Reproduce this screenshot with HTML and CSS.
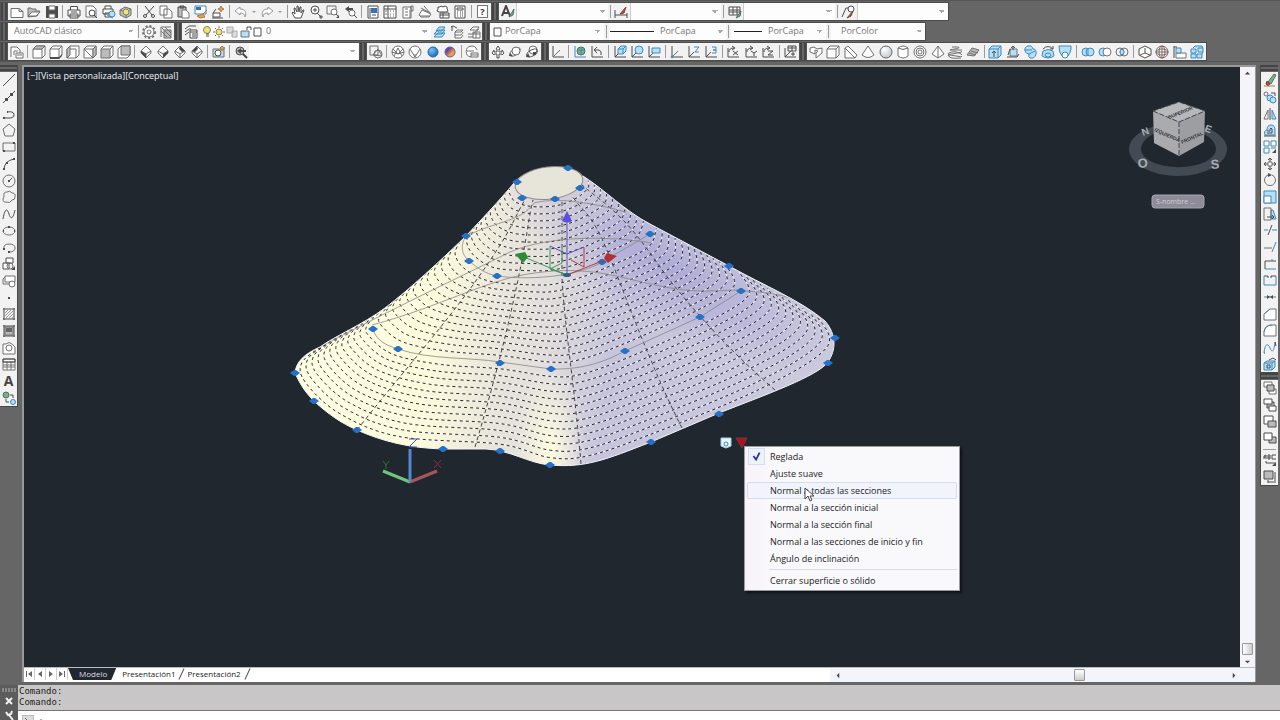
FILE: index.html
```html
<!DOCTYPE html>
<html lang="es">
<head>
<meta charset="utf-8">
<title>AutoCAD clásico</title>
<link rel="stylesheet" href="styles.css">
</head>
<body>
<header class="bars">
<div class="bar-row">
<div class="bar bar-standard" role="toolbar" aria-label="Estándar">
<span class="grip"></span>
<button class="tool" aria-label="Nuevo"><svg viewBox="0 0 14 14"><path class="w" d="M1 3.500h8l4 3v6H1zM9 3.500v3h4"/></svg></button>
<button class="tool" aria-label="Abrir"><svg viewBox="0 0 14 14"><path class="g" d="M1 12V3h3l1 1h4v2h4l-3 5z"/><path class="w" d="M1 11l4-4h8l-4 4z"/></svg></button>
<button class="tool" aria-label="Guardar"><svg viewBox="0 0 14 14"><path class="k" d="M1 1h12v12H1z"/><path class="w" d="M4 1h6v4H4zM4 9h6v4H4z"/></svg></button>
<span class="sep"></span>
<button class="tool" aria-label="Imprimir"><svg viewBox="0 0 14 14"><path class="w d" d="M3.500 5V1.500h7V5M1 5h12v6H1zM3 9h8v4H3z"/><path class="d" d="M4 7h6"/></svg></button>
<button class="tool" aria-label="Vista previa"><svg viewBox="0 0 14 14"><path class="w" d="M2 1h7l3 3v8H2z"/><circle class="w d" cx="8" cy="8" r="3"/><path class="d" d="M10 10l3 3"/></svg></button>
<button class="tool" aria-label="Publicar"><svg viewBox="0 0 14 14"><path class="w d" d="M3 4V1h6v3M1 4h10v5H1zM3 8h6v4H3z"/><circle class="lb b" cx="10" cy="9" r="3"/><path class="b" d="M5 10l6 3"/></svg></button>
<button class="tool" aria-label="3DDWF"><svg viewBox="0 0 14 14"><path class="g" d="M1 5l5-3 6 2v6l-5 3-6-3zM1 5l6 2 5-3M7 7v6"/><circle class="yl" cx="7" cy="7" r="3"/></svg></button>
<span class="sep"></span>
<button class="tool" aria-label="Cortar"><svg viewBox="0 0 14 14"><path class="d" d="M3 1l7 9M12 1L4 10"/><circle class="d" cx="3" cy="11" r="1.500"/><circle class="d" cx="11" cy="11" r="1.500"/></svg></button>
<button class="tool" aria-label="Copiar"><svg viewBox="0 0 14 14"><path class="w" d="M1 1h7v9H1zM5 4h5l3 3v6H5z"/></svg></button>
<button class="tool" aria-label="Pegar"><svg viewBox="0 0 14 14"><path class="g d" d="M2 2h8v10H2zM4 1h4v2H4z"/><path class="w" d="M6 5h4l3 3v5H6z"/></svg></button>
<button class="tool" aria-label="Igualar propiedades"><svg viewBox="0 0 14 14"><path class="w b" d="M1 1h11v8H1z"/><path class="bf" d="M2 2h5v3H2z"/><path class="o" d="M3 11l6-2 2 3-5 1zM9 9l4-4"/></svg></button>
<button class="tool" aria-label="Editor de bloques"><svg viewBox="0 0 14 14"><path class="w d" d="M2 8h7v4H2zM1 13h11M2 8l3-4"/><path class="o" d="M10 1l1 2 2 1-2 1-1 2-1-2-2-1 2-1z"/></svg></button>
<span class="sep"></span>
<button class="tool" aria-label="Deshacer"><svg viewBox="0 0 14 14"><path class="w faint" d="M1 6l5-4v2c5 0 7 3 5 8 0-3-2-4-5-4v2z"/></svg></button>
<button class="drop" aria-label="Lista deshacer"></button>
<button class="tool" aria-label="Rehacer"><svg viewBox="0 0 14 14"><path class="w faint" d="M13 6L8 2v2C3 4 1 7 3 12c0-3 2-4 5-4v2z"/></svg></button>
<button class="drop" aria-label="Lista rehacer"></button>
<span class="sep"></span>
<button class="tool" aria-label="Encuadre"><svg viewBox="0 0 14 14"><path class="w d" d="M4 13L1 8l1-1 2 2-1-6h1l2 4V1h1l1 6 1-5h1v6l2-3h1l-3 8z"/></svg></button>
<button class="tool" aria-label="Zoom tiempo real"><svg viewBox="0 0 14 14"><circle class="w d" cx="6" cy="5" r="4"/><path class="d" d="M4 5h4M6 3v4M8 8l4 4M10 12h4M12 10v4"/></svg></button>
<button class="tool" aria-label="Zoom ventana"><svg viewBox="0 0 14 14"><path d="M1 1h9v8H1z"/><circle class="w" cx="8" cy="7" r="3"/><path class="d" d="M10 9l3 3"/><path class="k" d="M10 13h3v-3z"/></svg></button>
<button class="tool" aria-label="Zoom previo"><svg viewBox="0 0 14 14"><path class="k" d="M1 4l4-3v2h4v2H5v2z"/><circle class="w" cx="8" cy="8" r="3"/><path class="d" d="M10 10l3 3"/></svg></button>
<span class="sep"></span>
<button class="tool" aria-label="Propiedades"><svg viewBox="0 0 14 14"><path class="w d" d="M2 1h10v12H2z"/><path class="bf" d="M5 3h6v5H5z"/><path class="d" d="M4 3v9M6 10h4"/></svg></button>
<button class="tool" aria-label="DesignCenter"><svg viewBox="0 0 14 14"><path class="w d" d="M1 1h12v12H1zM5 1v12M1 4h12"/><path d="M7 6h1M10 6h1M7 9h1M10 9h1M7 11h1M10 11h1M2 6h2M2 9h2"/></svg></button>
<button class="tool" aria-label="Paletas"><svg viewBox="0 0 14 14"><path class="w" d="M2 2h8v11H2zM10 1h2v5h-2zM4 4h3M4 7h3M4 10h3M9 5v8"/></svg></button>
<button class="tool" aria-label="Conjuntos de planos"><svg viewBox="0 0 14 14"><path class="w" d="M1 10l3-5 9 4-2 3H3zM3 3l9 5M6 1l6 7M2 11h10"/></svg></button>
<button class="tool" aria-label="Marcas"><svg viewBox="0 0 14 14"><path class="w d" d="M2 4V2h2l1-1 2 1 2-1 2 1v2l1 1-1 2H3L1 6zM4 8h9v5H4zM7 8v5M4 10h9"/></svg></button>
<button class="tool" aria-label="Calculadora"><svg viewBox="0 0 14 14"><path class="w d" d="M2 1h10v12H2zM4 3h6v2H4z"/><path class="d" d="M4 7h1M7 7h1M9 7h1M4 9h1M7 9h1M9 9h1M4 11h1M7 11h1M9 11h1"/></svg></button>
<span class="sep"></span>
<button class="tool" aria-label="Ayuda"><span class="help">?</span></button>
</div>
<div class="bar bar-styles" role="toolbar" aria-label="Estilos">
<span class="grip"></span>
<button class="tool" aria-label="Estilo de texto"><svg viewBox="0 0 14 14"><path class="t" d="M1 11L5 1l4 10M2 8h6"/><path class="gr" d="M13 4l-5 8 4-2z"/></svg></button>
<select class="combo" aria-label="Estilo de texto"><option></option></select>
<span class="sep"></span>
<button class="tool" aria-label="Estilo de cota"><svg viewBox="0 0 14 14"><path class="d" d="M1 5v8M13 8v5M1 10h12"/><path class="r" d="M12 2l-6 7 4-1z"/></svg></button>
<select class="combo" aria-label="Estilo de cota"><option></option></select>
<span class="sep"></span>
<button class="tool" aria-label="Estilo de tabla"><svg viewBox="0 0 14 14"><path class="w d" d="M1 2h11v8H1zM1 5h11M5 2v8M9 2v8M1 7h11"/><path class="gr" d="M13 6l-5 7 4-2z"/></svg></button>
<select class="combo" aria-label="Estilo de tabla"><option></option></select>
<span class="sep"></span>
<button class="tool" aria-label="Estilo de directriz"><svg viewBox="0 0 14 14"><path class="d" d="M1 12L5 3h3"/><circle class="w d" cx="10" cy="4" r="3"/><path class="r" d="M12 6l-6 7 4-2z"/></svg></button>
<select class="combo" aria-label="Estilo de directriz"><option></option></select>
</div>
</div>
<div class="bar-row">
<div class="bar bar-workspace" role="toolbar" aria-label="Espacios de trabajo">
<span class="grip"></span>
<select class="combo" aria-label="Espacio de trabajo"><option>AutoCAD clásico</option></select>
<span class="sep"></span>
<button class="tool" aria-label="Parámetros"><svg viewBox="0 0 14 14"><circle class="gear" cx="7" cy="7" r="6"/><circle class="w" cx="7" cy="7" r="5"/><circle cx="7" cy="7" r="2"/></svg></button>
<button class="tool" aria-label="Mi espacio"><svg viewBox="0 0 14 14"><path class="g" d="M2 2h10M2 2v10M5 5h7v8H5zM3 3l9 9M6 2l6 6M2 6l6 6"/></svg></button>
</div>
<div class="bar bar-layers" role="toolbar" aria-label="Capas">
<span class="grip"></span>
<button class="tool" aria-label="Propiedades de capas"><svg viewBox="0 0 14 14"><path class="w d" d="M1 4l4-3h7M1 7l4-3h2M1 10l4-3M6 5h7v8H6zM6 7h7M8 9h4M8 11h4"/></svg></button>
<div class="field field-layer">
<svg class="layer-marks" viewBox="0 0 60 14"><circle class="yl" cx="5" cy="5" r="3.500"/><path class="d" d="M4 9h3M4 11h3"/><circle class="yl" cx="17" cy="7" r="3"/><path d="M17 1v2M17 11v2M11 7h2M21 7h2M13 3l1 1M20 10l1 1M21 3l-1 1M13 11l1-1"/><path class="g pale" d="M25 2h6v6h-6zM30 6h5v6h-5z"/><path class="d" d="M45 5V2h4v3"/><path class="lb" d="M39 6h8v6h-8z"/><path class="w d" d="M52 3h7v8h-7z"/></svg>
<select class="combo" aria-label="Capa actual"><option>0</option></select>
</div>
<button class="tool" aria-label="Definir actual"><svg viewBox="0 0 14 14"><path class="lb b" d="M1 12l4-4h7l-3 4zM1 9l4-4h7l-3 4zM3 6l3-4h6l-3 4z"/></svg></button>
<button class="tool" aria-label="Capa previa"><svg viewBox="0 0 14 14"><path class="d" d="M2 1v5M1 2l2-1 4 2"/><path class="w" d="M5 7l2-2h6l-2 2zM5 10h6l2-3M5 13h6l2-3M5 7v6"/></svg></button>
<button class="tool" aria-label="Estados de capas"><svg viewBox="0 0 14 14"><path class="w" d="M3 5l3-3h6l-2 3zM1 9h5l6-5M1 12h5M6 7h7v6H6zM6 9h7M9 7v6"/></svg></button>
</div>
<div class="bar bar-props" role="toolbar" aria-label="Propiedades">
<span class="grip"></span>
<div class="field field-color"><svg class="mark" viewBox="0 0 14 14"><path class="w d" d="M4 3h7v8H4z"/></svg><select class="combo" aria-label="Color"><option>PorCapa</option></select></div>
<span class="sep"></span>
<div class="field field-type"><span class="line"></span><select class="combo" aria-label="Tipo de línea"><option>PorCapa</option></select></div>
<span class="sep"></span>
<div class="field field-weight"><span class="line"></span><select class="combo" aria-label="Grosor de línea"><option>PorCapa</option></select></div>
<span class="sep"></span>
<div class="field field-plot"><select class="combo" aria-label="Estilo de trazado"><option>PorColor</option></select></div>
</div>
</div>
<div class="bar-row">
<div class="bar bar-view" role="toolbar" aria-label="Vista">
<span class="grip"></span>
<button class="tool" aria-label="Vistas guardadas"><svg viewBox="0 0 14 14"><path class="w" d="M1 12V2h6l3 3v3M4 10V6h4M6 8h7v5H6zM7 10h5"/></svg></button>
<span class="sep"></span>
<button class="tool" aria-label="Superior"><svg viewBox="0 0 14 14"><path class="w" d="M1 4h9v9H1zM1 4l3-3h9v9l-3 3M10 4l3-3"/><path class="g" d="M1 4l3-3h9l-3 3z"/></svg></button>
<button class="tool" aria-label="Inferior"><svg viewBox="0 0 14 14"><path class="w" d="M1 4h9v9H1zM1 4l3-3h9v9l-3 3M10 4l3-3"/><path class="k" d="M1 12h9l3-3v2l-3 3H1z"/></svg></button>
<button class="tool" aria-label="Izquierda"><svg viewBox="0 0 14 14"><path class="w" d="M1 4h9v9H1zM1 4l3-3h9v9l-3 3"/><path class="g" d="M1 4l3-3v9l-3 3z"/></svg></button>
<button class="tool" aria-label="Derecha"><svg viewBox="0 0 14 14"><path class="w" d="M1 4h9v9H1zM1 4l3-3h9v9l-3 3z"/><path class="g" d="M10 4l3-3v9l-3 3z"/></svg></button>
<button class="tool" aria-label="Frontal"><svg viewBox="0 0 14 14"><path class="w" d="M1 4l3-3h9v9l-3 3M10 4l3-3"/><path class="g" d="M1 4h9v9H1z"/></svg></button>
<button class="tool" aria-label="Posterior"><svg viewBox="0 0 14 14"><path class="w" d="M1 4l3-3h9v9l-3 3H1z"/><path class="g" d="M4 1h9v9H4z"/></svg></button>
<span class="sep"></span>
<button class="tool" aria-label="Isométrico SO"><svg viewBox="0 0 14 14"><path class="w" d="M2 6l5-5 5 5v2l-5 5-5-5zM2 6l5 3 5-3M7 9v4"/><path class="k" d="M2 6l5 3v4L2 8z"/></svg></button>
<button class="tool" aria-label="Isométrico SE"><svg viewBox="0 0 14 14"><path class="w" d="M2 6l5-5 5 5v2l-5 5-5-5zM2 6l5 3 5-3"/><path class="k" d="M12 6L7 9v4l5-5z"/></svg></button>
<button class="tool" aria-label="Isométrico NE"><svg viewBox="0 0 14 14"><path class="w" d="M2 6l5-5 5 5v2l-5 5-5-5zM2 6l5 3 5-3M7 9v4"/><path class="k" d="M7 1l5 5-3 1-3-3z"/></svg></button>
<button class="tool" aria-label="Isométrico NO"><svg viewBox="0 0 14 14"><path class="w" d="M2 6l5-5 5 5v2l-5 5-5-5zM2 6l5 3 5-3M7 9v4"/><path class="k" d="M7 1L2 6l3 1 3-3z"/></svg></button>
<span class="sep"></span>
<button class="tool" aria-label="Crear cámara"><svg viewBox="0 0 14 14"><path class="lb" d="M1 4h11v8H1z"/><circle class="w d" cx="6" cy="8" r="3"/><path class="o" d="M10 1l1 1 2 1-2 1-1 2-1-2-1-1z"/></svg></button>
<span class="sep"></span>
<button class="tool" aria-label="Vista previa anterior"><svg viewBox="0 0 14 14"><circle class="g d" cx="6" cy="6" r="4"/><path class="k" d="M3 6l4-3v2h5v2H7v2z"/><path class="t" d="M9 9l4 4"/></svg></button>
<select class="combo" aria-label="Vista"><option></option></select>
</div>
<div class="bar bar-visual" role="toolbar" aria-label="Estilos visuales">
<span class="grip"></span>
<button class="tool" aria-label="Estructura alámbrica 2D"><svg viewBox="0 0 14 14"><path d="M1 1h8v9H1z"/><circle cx="9" cy="9" r="4"/><path d="M4 10l5-6 4 7z"/></svg></button>
<span class="sep"></span>
<button class="tool" aria-label="Alámbrica 3D"><svg viewBox="0 0 14 14"><circle class="w" cx="7" cy="7" r="6"/><path d="M2 4l5 5 5-5M3 11l4-8 4 8M1 7l6 2 6-2"/></svg></button>
<button class="tool" aria-label="Oculta 3D"><svg viewBox="0 0 14 14"><circle class="w" cx="7" cy="7" r="6"/><path d="M2 4l5 8 5-8M7 12V9"/></svg></button>
<button class="tool" aria-label="Realista"><svg viewBox="0 0 14 14"><circle fill="url(#ball-blue)" stroke="#1769b8" cx="7" cy="7" r="5"/></svg></button>
<button class="tool" aria-label="Conceptual"><svg viewBox="0 0 14 14"><circle fill="url(#ball-duo)" stroke="#6f579d" cx="7" cy="7" r="5"/></svg></button>
<span class="sep"></span>
<button class="tool" aria-label="Administrar estilos"><svg viewBox="0 0 14 14"><path class="w" d="M12 5A5.500 5.500 0 1 0 6 12M2 6h7M6 8h7v4H6zM6 10h7"/></svg></button>
</div>
<div class="bar bar-orbit" role="toolbar" aria-label="Órbita">
<span class="grip"></span>
<button class="tool" aria-label="Encuadre 3D"><svg viewBox="0 0 14 14"><path class="w d" d="M7 1l2 3H8v3h3V5l2 3-2 2V9H8v4H6V9H3v1L1 8l2-3v2h3V4H5z"/></svg></button>
<button class="tool" aria-label="Órbita libre"><svg viewBox="0 0 14 14"><ellipse transform="rotate(-35 7 7)" cx="7" cy="7" rx="6" ry="3"/><circle class="w" cx="8" cy="6" r="4"/><path class="k" d="M1 11h4l-3-3z"/></svg></button>
<button class="tool" aria-label="Órbita continua"><svg viewBox="0 0 14 14"><circle class="w" cx="8" cy="5" r="4"/><ellipse transform="rotate(-30 7 8)" class="d" cx="7" cy="8" rx="6" ry="3"/><path class="k" d="M1 12h4L3 8zM8 7h3v3H8z"/></svg></button>
</div>
<div class="bar bar-ucs" role="toolbar" aria-label="SCP">
<span class="grip"></span>
<button class="tool" aria-label="SCP"><svg viewBox="0 0 14 14"><path class="d" d="M2 1v11h11"/><path d="M2 12l7-7"/></svg></button>
<span class="sep"></span>
<button class="tool" aria-label="SCP universal"><svg viewBox="0 0 14 14"><path class="b" d="M2 1v11h11"/><circle class="gr" cx="8" cy="6" r="4"/><path class="b" d="M5 5h6M8 2v8"/></svg></button>
<button class="tool" aria-label="SCP previo"><svg viewBox="0 0 14 14"><path class="d" d="M2 1v11h11M5 5h4q3 1 2 5M7 2L4 5l3 3"/></svg></button>
<span class="sep"></span>
<button class="tool" aria-label="SCP cara"><svg viewBox="0 0 14 14"><path class="d" d="M2 1v11h11M2 12l4-4"/><path class="lb b" d="M5 4l3-3h5v5l-3 3H5zM5 4h5v5M10 4l3-3"/></svg></button>
<button class="tool" aria-label="SCP objeto"><svg viewBox="0 0 14 14"><path class="d" d="M2 1v11h11M2 12l4-4"/><circle class="lb b" cx="9" cy="5" r="4"/></svg></button>
<button class="tool" aria-label="SCP vista"><svg viewBox="0 0 14 14"><path class="d" d="M2 1v11h11M2 12l4-4"/><path class="lb b" d="M5 3h8v5H5z"/></svg></button>
<span class="sep"></span>
<button class="tool" aria-label="Origen"><svg viewBox="0 0 14 14"><path class="d" d="M2 1v11h11"/><path d="M2 12l6-6"/><circle class="b" cx="2" cy="12" r="1"/></svg></button>
<button class="tool" aria-label="Vector eje Z"><svg viewBox="0 0 14 14"><path class="d" d="M2 1v11h11M2 12l5-5"/><path class="b" d="M7 2h5L8 7h4"/></svg></button>
<button class="tool" aria-label="3 puntos"><svg viewBox="0 0 14 14"><path class="d" d="M2 1v11h11M2 12l5-5"/><path class="b" d="M8 2h4v3H9h3v3H8"/></svg></button>
<span class="sep"></span>
<button class="tool" aria-label="Girar X"><svg viewBox="0 0 14 14"><path class="d" d="M2 3v9h11M3 7q0-4 5-4M6 1l3 2-3 2M7 6l5 4M12 6l-5 4"/></svg></button>
<button class="tool" aria-label="Girar Y"><svg viewBox="0 0 14 14"><path class="d" d="M2 3v9h11M3 7q0-4 5-4M6 1l3 2-3 2M7 6l3 2 3-2M10 8v3"/></svg></button>
<button class="tool" aria-label="Girar Z"><svg viewBox="0 0 14 14"><path class="d" d="M2 3v9h11M3 7q0-4 5-4M6 1l3 2-3 2M7 6h5l-5 4h5"/></svg></button>
<span class="sep"></span>
<button class="tool" aria-label="Aplicar SCP"><svg viewBox="0 0 14 14"><path class="d" d="M2 3v9h11M2 12l6-6M5 1h8v5H5zM9 1v5M5 3h8M10 7v4M8 9h4"/></svg></button>
</div>
<div class="bar bar-model" role="toolbar" aria-label="Modelado">
<span class="grip"></span>
<button class="tool" aria-label="Polisólido"><svg viewBox="0 0 14 14"><path class="w" d="M1 3l4-1 3 2 5-1v5l-6 5V8l2-2-3-1v4L1 7z"/></svg></button>
<button class="tool" aria-label="Prisma"><svg viewBox="0 0 14 14"><path class="w" d="M1 4l3-3h9v9l-3 3H1zM1 4h9l3-3M10 4v9"/></svg></button>
<button class="tool" aria-label="Cuña"><svg viewBox="0 0 14 14"><path class="w" d="M1 12V3l3-2 9 9-2 3H1zM1 3l10 10"/></svg></button>
<button class="tool" aria-label="Cono"><svg viewBox="0 0 14 14"><path class="w" d="M7 1l6 9q-6 5-12 0z"/></svg></button>
<button class="tool" aria-label="Esfera"><svg viewBox="0 0 14 14"><circle fill="url(#ball-gray)" stroke="#666" cx="7" cy="7" r="6"/></svg></button>
<button class="tool" aria-label="Cilindro"><svg viewBox="0 0 14 14"><path class="w" d="M2 3v8q5 4 10 0V3M2 3q5-4 10 0-5 3-10 0"/></svg></button>
<button class="tool" aria-label="Toroide"><svg viewBox="0 0 14 14"><circle class="w" cx="7" cy="7" r="6"/><circle cx="7" cy="7" r="4"/><circle cx="7" cy="7" r="2"/></svg></button>
<button class="tool" aria-label="Pirámide"><svg viewBox="0 0 14 14"><path class="w" d="M7 1l6 8-6 4-6-4zM7 1v12"/></svg></button>
<button class="tool" aria-label="Hélice"><svg viewBox="0 0 14 14"><path d="M4 2h6q3 1-3 2t-5 1 11 0-4 3-8 0 12 1-5 2-7 0q0 3 12 2"/></svg></button>
<button class="tool" aria-label="Superficie plana"><svg viewBox="0 0 14 14"><path class="g" d="M1 10l5-7 7 2-5 6z"/><path d="M3 8l7 2M5 6l7 2"/></svg></button>
<span class="sep"></span>
<button class="tool" aria-label="Extrusión"><svg viewBox="0 0 14 14"><path class="lb b" d="M1 4l3-3h9v9l-3 3H1zM1 4h9v9M10 4l3-3"/><path class="d" d="M6 12V6M4 8l2-2 2 2"/></svg></button>
<button class="tool" aria-label="Pulsartirar"><svg viewBox="0 0 14 14"><path class="lb" d="M4 4h7v7H4z"/><path class="d" d="M1 12h10l2-3M7 5V1M5 3l2-2 2 2M2 10l2-6"/></svg></button>
<button class="tool" aria-label="Barrer"><svg viewBox="0 0 14 14"><path class="lb b" d="M2 6q-1-4 3-5t5 3q4 0 3 5t-6 4q-2-1-1-4-3 0-4-3zM6 9l6-3M2 5h7"/></svg></button>
<button class="tool" aria-label="Revolución"><svg viewBox="0 0 14 14"><path class="lb b" d="M2 6q5-3 10 0l1 5q-6 4-12 0z"/><path class="d" d="M2 4q5-5 10 0M12 1v3H9"/><ellipse class="b" cx="7" cy="10" rx="3" ry="2"/></svg></button>
<button class="tool" aria-label="Solevar"><svg viewBox="0 0 14 14"><path class="lb b" d="M1 1h12v3q-1 5-3 7H4Q1 8 1 1z"/><circle class="w b" cx="7" cy="10" r="3"/></svg></button>
<span class="sep"></span>
<button class="tool" aria-label="Unión"><svg viewBox="0 0 14 14"><circle class="lb b" cx="5" cy="7" r="4"/><circle class="lb b" cx="9" cy="7" r="4"/><path class="b" d="M7 4v6"/></svg></button>
<button class="tool" aria-label="Diferencia"><svg viewBox="0 0 14 14"><circle class="lb b" cx="5" cy="7" r="4"/><circle class="w" cx="9" cy="7" r="4"/></svg></button>
<button class="tool" aria-label="Intersección"><svg viewBox="0 0 14 14"><circle cx="5" cy="7" r="4"/><circle cx="9" cy="7" r="4"/><path class="lb b" d="M7 4q4 3 0 6-4-3 0-6z"/></svg></button>
<span class="sep"></span>
<button class="tool" aria-label="Desplazamiento 3D"><svg viewBox="0 0 14 14"><path class="w d" d="M1 4l6-3 6 3v6l-6 3-6-3z"/><path class="d" d="M7 3v5M7 8l5 2"/><path class="rs" d="M7 8l-5 2"/></svg></button>
<button class="tool" aria-label="Giro 3D"><svg viewBox="0 0 14 14"><circle class="w" cx="7" cy="7" r="6"/><ellipse class="rs" cx="7" cy="7" rx="3" ry="6"/><ellipse cx="7" cy="7" rx="6" ry="3"/><path d="M7 1v12M1 7h12"/></svg></button>
<button class="tool" aria-label="Alineación 3D"><svg viewBox="0 0 14 14"><path class="w" d="M3 8h10v5H3z"/><path class="lb b" d="M3 3h5v5H3z"/><path class="d" d="M1 1v12M1 2h3"/></svg></button>
<button class="tool" aria-label="Matriz 3D"><svg viewBox="0 0 14 14"><path class="lb b" d="M1 4h5v4H1zM8 3h5v4H8zM1 9h5v4H1zM7 9h5v4H7zM3 3l2-2h7l1 2M12 9l1-2"/></svg></button>
</div>
</div>
</header>
<main class="work">
<aside class="side side-left">
<div class="rail rail-draw" role="toolbar" aria-label="Dibujo">
<span class="grip-top"></span>
<button class="tool" aria-label="Línea"><svg viewBox="0 0 14 14"><path class="d" d="M2 12L12 2"/><path class="k" d="M1 12h1v1H1zM12 1h1v1h-1z"/></svg></button>
<button class="tool" aria-label="Línea auxiliar"><svg viewBox="0 0 14 14"><path class="d" d="M1 13L13 1"/><path class="k" d="M3 8h3v3H3zM8 3h3v3H8z"/></svg></button>
<button class="tool" aria-label="Polilínea"><svg viewBox="0 0 14 14"><path class="d" d="M1 11h8q4-1 3-4t-7-2"/><path class="k" d="M1 10h2v2H1zM5 4h1v2H5z"/></svg></button>
<button class="tool" aria-label="Polígono"><svg viewBox="0 0 14 14"><path d="M7 1l6 5-2 7H3L1 6z"/></svg></button>
<button class="tool" aria-label="Rectángulo"><svg viewBox="0 0 14 14"><path d="M1 3h12v8H1z"/><path class="k" d="M1 10h2v2H1zM11 2h2v2h-2z"/></svg></button>
<button class="tool" aria-label="Arco"><svg viewBox="0 0 14 14"><path class="d" d="M2 13Q2 4 12 2"/><path class="k" d="M1 11h2v2H1zM4 5h2v2H4zM11 1h2v2h-2z"/></svg></button>
<button class="tool" aria-label="Círculo"><svg viewBox="0 0 14 14"><circle cx="7" cy="7" r="6"/><path class="d" d="M7 7l3-3"/><path class="k" d="M6 6h2v2H6z"/></svg></button>
<button class="tool" aria-label="Nube de revisión"><svg viewBox="0 0 14 14"><path d="M5 2q3-2 5 1 4 0 3 4 0 3-3 3-2 4-5 2-4 1-4-3 1-2 1-3-1-4 3-4z"/></svg></button>
<button class="tool" aria-label="Spline"><svg viewBox="0 0 14 14"><path class="d" d="M1 12C3 1 5 1 7 7s4 5 6-4"/></svg></button>
<button class="tool" aria-label="Elipse"><svg viewBox="0 0 14 14"><ellipse cx="7" cy="7" rx="6" ry="4"/><path class="k" d="M1 6h1v2H1zM12 6h1v2h-1zM6 2h2v2H6z"/></svg></button>
<button class="tool" aria-label="Arco elíptico"><svg viewBox="0 0 14 14"><path d="M2 9q-1-5 5-5 6 0 6 4t-6 4"/><path class="k" d="M1 8h2v2H1zM6 11h2v2H6z"/></svg></button>
<button class="tool" aria-label="Insertar bloque"><svg viewBox="0 0 14 14"><path class="w d" d="M4 1h7v5H4zM1 6h6v6H1z"/><circle cx="8" cy="9" r="3"/><path class="k" d="M9 13h4V9z"/></svg></button>
<button class="tool" aria-label="Crear bloque"><svg viewBox="0 0 14 14"><path class="w" d="M3 2h10v6H3z"/><path d="M3 3L1 5v5h6"/><circle class="w" cx="10" cy="10" r="3"/></svg></button>
<button class="tool" aria-label="Punto"><svg viewBox="0 0 14 14"><path class="k" d="M6 7h2v2H6z"/></svg></button>
<button class="tool" aria-label="Sombreado"><svg viewBox="0 0 14 14"><path class="d" d="M1 2h12M1 12h12M2 1v12M12 1v12"/><path class="faint" d="M3 6l3-3M3 9l6-6M3 12l8-8M6 12l5-5M9 12l2-2"/></svg></button>
<button class="tool" aria-label="Degradado"><svg viewBox="0 0 14 14"><path class="g" d="M3 3h8v8H3z"/><path class="d" d="M1 2h12M1 12h12M2 1v12M12 1v12"/><path class="bar-fill" d="M4 4h6v4H4z"/></svg></button>
<button class="tool" aria-label="Región"><svg viewBox="0 0 14 14"><path class="w" d="M1 3h3q3-3 6 0l3 3v7H1z"/><circle cx="7" cy="7" r="3"/></svg></button>
<button class="tool" aria-label="Tabla"><svg viewBox="0 0 14 14"><path class="w" d="M1 2h12v11H1zM1 5h12M1 8h12M1 10h12M5 5v8M9 5v8"/><path class="d" d="M1 2h12v3H1z"/></svg></button>
<button class="tool letter" aria-label="Texto">A</button>
<button class="tool" aria-label="Añadir seleccionados"><svg viewBox="0 0 14 14"><circle class="gr" cx="4" cy="4" r="3"/><circle class="lb b" cx="11" cy="11" r="2.500"/><path class="d" d="M8 4h3v3M4 8v3h3"/></svg></button>
</div>
</aside>
<section class="window" aria-label="Dibujo">
<div class="canvas">
<svg class="scene" role="img" aria-label="Superficie solevada">
<defs>
<radialGradient id="ball-blue" cx=".35" cy=".3" r=".8"><stop offset="0" stop-color="#7cc4f5"/><stop offset="1" stop-color="#1160b4"/></radialGradient>
<radialGradient id="ball-gray" cx=".35" cy=".3" r=".8"><stop offset="0" stop-color="#fff"/><stop offset="1" stop-color="#bcc3c9"/></radialGradient>
<linearGradient id="ball-duo" x1="0" y1="0" x2="1" y2="1"><stop offset=".3" stop-color="#6743a5"/><stop offset=".65" stop-color="#efa13e"/></linearGradient>
<linearGradient id="skin" gradientUnits="userSpaceOnUse" x1="295" y1="330" x2="835" y2="390"><stop offset="0" stop-color="#fefee2"/><stop offset=".25" stop-color="#fdfbdc"/><stop offset=".38" stop-color="#e9e5dc"/><stop offset=".46" stop-color="#e2dedd"/><stop offset=".58" stop-color="#c7c5dd"/><stop offset="1" stop-color="#cccade"/></linearGradient>
<radialGradient id="shade" gradientUnits="userSpaceOnUse" cx="0" cy="0" r="1" gradientTransform="translate(668 268) rotate(30) scale(190 58)"><stop offset="0" stop-color="#a6a4d6" stop-opacity=".8"/><stop offset="1" stop-color="#a6a4d6" stop-opacity="0"/></radialGradient>
<radialGradient id="glow" gradientUnits="userSpaceOnUse" cx="0" cy="0" r="1" gradientTransform="translate(550 450) scale(36 90)"><stop offset="0" stop-color="#fffde0"/><stop offset="1" stop-color="#fffde0" stop-opacity="0"/></radialGradient>
<clipPath id="body-clip"><path d="M514 183C500 200 480 221 466 236C440 261 410 289 385 308C362 325 335 336 320 347C304 354 296 362 295 373C301 386 306 393 314 401C328 414 341 423 357 430C382 441 408 448 443 449H486C510 450 528 463 550 465C585 468 605 460 651 442L719 413C765 395 818 376 828 362C836 350 837 335 825 321C800 300 765 286 729 266L650 224C625 211 605 190 583 176C570 160 525 166 514 183Z"/></clipPath>
</defs>
<g transform="translate(-24 -67)">
<g clip-path="url(#body-clip)">
<g class="fills">
<rect x="290" y="160" width="550" height="310" fill="url(#skin)"/>
<rect x="290" y="160" width="550" height="310" fill="url(#shade)"/>
<rect x="500" y="340" width="100" height="130" fill="url(#glow)"/>
</g>
<g id="mesh"></g>
<path class="ribs" d="M357 430C400 375 445 325 480 275S510 225 526 198M475 447C495 380 510 320 520 270S528 220 533 200M581 464C575 390 565 330 562 278V200M682 428C660 385 638 330 615 270S585 215 572 196M775 390C740 360 690 310 655 260S605 205 581 184"/>
<path class="section" d="M320 347C390 310 460 277 510 252C550 235 610 236 652 243M372 325C440 307 490 278 535 273C590 265 620 278 660 286S715 290 741 290M466 236C500 220 520 222 534 203C560 196 600 205 626 212M373 329C376 340 385 345 398 349C430 360 470 357 500 362L551 369C585 370 608 360 625 351L700 317L741 291C790 292 815 305 828 325M466 236C459 247 463 256 469 261S485 274 497 276C525 280 575 278 602 262L650 234"/>
</g>
<path class="outline" d="M514 183C500 200 480 221 466 236C440 261 410 289 385 308C362 325 335 336 320 347C304 354 296 362 295 373C301 386 306 393 314 401C328 414 341 423 357 430C382 441 408 448 443 449H486C510 450 528 463 550 465C585 468 605 460 651 442L719 413C765 395 818 376 828 362C836 350 837 335 825 321C800 300 765 286 729 266L650 224C625 211 605 190 583 176"/>
<ellipse class="cap" cx="549" cy="183" rx="34" ry="16" transform="rotate(-7 549 183)"/>
<g class="grips" id="grips"></g>
<g class="gizmo">
<path stroke="#3f9a5c" d="M550 246v23M550 269l17 6M524 257l43 18M550 269l12-6v-15"/><path stroke="#5a4dc0" d="M567 275v-54M550 246l17 8 17-7"/><path stroke="#b03a48" d="M567 275l40-16M584 247v20M571 260l13 7"/>
<path fill="#2c8a3a" d="M515 254l10-2 3 5-5 6z"/><path fill="#b32f35" d="M617 256l-10-3-3 5 4 5z"/><path fill="#5c4fe0" d="M567 211l-5 10q5 3 10 0z"/><ellipse fill="#2e5e86" cx="567" cy="275" rx="4" ry="2"/>
</g>
<g class="ucs"><path stroke="#71c479" d="M410 482l-27-11"/><path stroke="#a9535b" d="M410 482l27-11"/><path stroke="#5588cf" d="M410 482v-33"/><path class="thin" stroke="#2c5fa8" d="M409 439h8l-8 8h8"/><path class="thin" stroke="#2f7540" d="M383 461l3 4 3-4M386 465v4"/><path class="thin" stroke="#8e2f38" d="M434 460l7 8M441 460l-7 8"/></g>
<g class="compass"><path class="ring" fill-rule="evenodd" d="M1129 149a49 26 0 0 1 98 0 49 27 0 0 1-98 0M1141 149a37 18 0 0 0 75 0 37 20 0 0 0-75 0"/>
<text class="pole dim" transform="translate(1143 136) rotate(-20)">N</text><text class="pole dim" transform="translate(1204 131) rotate(20)">E</text>
<path class="face-top" d="M1153 111l26-9 26 9-26 11z"/><path class="face-left" d="M1153 111l26 11v34l-25-13z"/><path class="face-right" d="M1205 111l-26 11v34l25-14z"/>
<path class="seams" d="M1153 111l26 11 26-11M1179 122v34M1153 111l26-9 26 9"/>
<text class="cube-text" transform="translate(1154 131) rotate(24)">IZQUIERDA</text><text class="cube-text" transform="translate(1182 144) rotate(-24)">FRONTAL</text><text class="cube-text" transform="translate(1169 119) rotate(-22)">SUPERIOR</text>
<text class="pole" transform="translate(1138 168) rotate(-4)">O</text><text class="pole" transform="translate(1211 169) rotate(-4)">S</text></g>
<rect x="1152" y="195" width="52" height="13" rx="3" fill="#8e8c98" stroke="#a7a5b0"/><text class="scp" x="1156" y="204">S-nombre ...</text>
<g class="handles"><path fill="#e8f6ff" stroke="#9ed2f0" d="M721 438h10v8l-5 2-5-2z"/><circle cx="726" cy="444" r="2" fill="#fff" stroke="#3b80aa"/><path fill="#b01020" stroke="#7d343b" d="M736 438h11l-5 10z"/></g>
</g>
</svg>
<span class="view-label">[−][Vista personalizada][Conceptual]</span>
<div class="menu" role="menu">
<button role="menuitemradio" aria-checked="true"><svg viewBox="0 0 17 17"><path d="M5 8l3 4 4-8"/></svg>Reglada</button>
<button role="menuitemradio">Ajuste suave</button>
<button role="menuitemradio" class="hot">Normal a todas las secciones</button>
<button role="menuitemradio">Normal a la sección inicial</button>
<button role="menuitemradio">Normal a la sección final</button>
<button role="menuitemradio">Normal a las secciones de inicio y fin</button>
<button role="menuitem">Ángulo de inclinación</button>
<hr>
<button role="menuitem">Cerrar superficie o sólido</button>
</div>
<svg class="pointer" viewBox="0 0 12 16"><path d="M1 1v11l3-3 2 5 2-1-2-4h4z"/></svg>
</div>
<div class="vscroll"><button aria-label="Subir"><svg viewBox="0 0 8 8"><path d="M1 5h6L4 2z"/></svg></button><span class="thumb"></span><button aria-label="Bajar"><svg viewBox="0 0 8 8"><path d="M1 3h6L4 6z"/></svg></button></div>
<div class="sheet-row">
<nav class="sheets">
<button class="step" aria-label="Primera"><svg viewBox="0 0 8 8"><path d="M1 1h1v6H1zM7 1v6L3 4z"/></svg></button><button class="step" aria-label="Anterior"><svg viewBox="0 0 8 8"><path d="M6 1v6L2 4z"/></svg></button><button class="step" aria-label="Siguiente"><svg viewBox="0 0 8 8"><path d="M2 1v6l4-3z"/></svg></button><button class="step" aria-label="Última"><svg viewBox="0 0 8 8"><path d="M1 1v6l4-3zM6 1h1v6H6z"/></svg></button>
<button class="sheet active">Modelo</button><button class="sheet">Presentación1</button><button class="sheet">Presentación2</button>
</nav>
<div class="hscroll"><button aria-label="Izquierda"><svg viewBox="0 0 8 8"><path d="M6 1v6L3 4z"/></svg></button><span class="thumb"></span><button aria-label="Derecha"><svg viewBox="0 0 8 8"><path d="M2 1v6l3-3z"/></svg></button></div>
</div>
</section>
<aside class="side side-right">
<div class="rail rail-modify" role="toolbar" aria-label="Modificar">
<span class="grip-top"></span>
<button class="tool" aria-label="Borrar"><svg viewBox="0 0 14 14"><path class="gr" d="M5 9l6-8 2 1-5 9z"/><path class="r" d="M4 8l3 3-2 2-2-2z"/><path class="o" d="M1 13h11"/></svg></button>
<button class="tool" aria-label="Copiar objeto"><svg viewBox="0 0 14 14"><circle cx="3" cy="4" r="2"/><path class="d" d="M8 3h4v3"/><circle class="lb b" cx="7" cy="8" r="3"/><circle class="lb b" cx="10" cy="10" r="3"/></svg></button>
<button class="tool" aria-label="Simetría"><svg viewBox="0 0 14 14"><path class="w" d="M5 3v9H1z"/><path class="lb b" d="M9 3v9h4z"/><path class="d" d="M7 1v12"/></svg></button>
<button class="tool" aria-label="Desfase"><svg viewBox="0 0 14 14"><path class="lb b" d="M2 12q-2-4 2-5 0-5 4-5t4 5v5z"/><path class="d" d="M4 10h5V6q-1-2-2 0v2H4M1 13h12"/></svg></button>
<button class="tool" aria-label="Matriz"><svg viewBox="0 0 14 14"><path class="w b" d="M1 1h5v5H1zM8 1h5v5H8zM1 8h5v5H1zM8 8h5"/><path class="k" d="M9 13h4V9z"/></svg></button>
<button class="tool" aria-label="Desplazar"><svg viewBox="0 0 14 14"><path class="d" d="M7 1v12M1 7h12M5 3l2-2 2 2M5 11l2 2 2-2M3 5L1 7l2 2M11 5l2 2-2 2"/><path class="w" d="M5 5h4v4H5z"/></svg></button>
<button class="tool" aria-label="Girar"><svg viewBox="0 0 14 14"><path d="M9 2a5.500 5.500 0 1 1-4 0"/><path class="k" d="M5 0l4 2-4 2z"/></svg></button>
<button class="tool" aria-label="Escala"><svg viewBox="0 0 14 14"><path class="lb b" d="M1 1h12v12H1z"/><path class="w b" d="M1 6h7v7H1z"/></svg></button>
<button class="tool" aria-label="Estirar"><svg viewBox="0 0 14 14"><path class="lb b" d="M8 3h2l3 9H8z"/><path d="M1 1h7v12H1z"/><path class="d" d="M4 10h7M9 8l2 2-2 2"/></svg></button>
<button class="tool" aria-label="Recortar"><svg viewBox="0 0 14 14"><path class="b" d="M1 7h4M9 7h5"/><path class="d" d="M9 2L5 12"/></svg></button>
<button class="tool" aria-label="Alargar"><svg viewBox="0 0 14 14"><path d="M1 8h8"/><path class="b" d="M13 2L9 12"/></svg></button>
<button class="tool" aria-label="Partir en un punto"><svg viewBox="0 0 14 14"><path class="d" d="M2 12V4h11"/><path class="b" d="M2 12h11M9 4V2"/></svg></button>
<button class="tool" aria-label="Partir"><svg viewBox="0 0 14 14"><path class="d" d="M1 3h4v2M8 5V3h5"/><path class="b" d="M1 3v9h12V3"/></svg></button>
<button class="tool" aria-label="Juntar"><svg viewBox="0 0 14 14"><path class="b" d="M1 7h12"/><path class="k" d="M4 5l3 2-3 2zM10 5L7 7l3 2z"/></svg></button>
<button class="tool" aria-label="Chaflán"><svg viewBox="0 0 14 14"><path class="w" d="M1 13V7l6-5h6v11z"/><path class="b" d="M1 7l6-5"/></svg></button>
<button class="tool" aria-label="Empalme"><svg viewBox="0 0 14 14"><path class="w" d="M1 13V9q1-7 8-7h4v11z"/><path class="b" d="M1 9q1-7 8-7"/></svg></button>
<button class="tool" aria-label="Fusionar"><svg viewBox="0 0 14 14"><path class="b" d="M1 13C2 3 5 3 7 8s4 4 5-6"/><path class="d" d="M1 13h1M12 2l1 4"/></svg></button>
<button class="tool" aria-label="Descomponer"><svg viewBox="0 0 14 14"><path class="lb b" d="M1 6l3-2h8v6l-3 3H1zM1 6h8v7M9 6l3-2"/><path class="d" d="M4 8h3v3H4zM6 3l4-2 3 2"/></svg></button>
</div>
<div class="rail rail-order" role="toolbar" aria-label="Orden de objetos">
<span class="grip-top"></span>
<button class="tool" aria-label="Al frente"><svg viewBox="0 0 14 14"><path class="w" d="M1 1h8v5H1zM6 8h7v5H6z"/><path class="g d" d="M4 4h7v6H4z"/></svg></button>
<button class="tool" aria-label="Detrás"><svg viewBox="0 0 14 14"><path class="g d" d="M4 4h7v6H4z"/><path class="w d" d="M1 1h8v5H1zM6 8h7v5H6z"/></svg></button>
<button class="tool" aria-label="Encima"><svg viewBox="0 0 14 14"><path class="w d" d="M1 1h9v8H1z"/><path class="g d" d="M5 6h8v6H5z"/></svg></button>
<button class="tool" aria-label="Debajo"><svg viewBox="0 0 14 14"><path class="g d" d="M6 6h7v6H6z"/><path class="w d" d="M1 2h8v7H1z"/></svg></button>
<span class="hsep"></span>
<button class="tool" aria-label="Texto al frente"><svg viewBox="0 0 14 14"><path class="d" d="M1 6V3l2-1v4M1 4h2M5 2h2v4H5zM5 4h2M13 2H9v4h4M3 8v2h9"/><path class="k" d="M9 13h4V9z"/></svg></button>
<button class="tool" aria-label="Sombreados detrás"><svg viewBox="0 0 14 14"><path class="g d" d="M1 1h9v8H1z"/><path class="d" d="M12 2v9M5 12h8M5 10v3"/></svg></button>
</div>
</aside>
</main>
<footer class="command">
<div class="command-side"><span class="dots"></span><button aria-label="Cerrar"><svg viewBox="0 0 10 10"><path d="M2 2l6 6M8 2L2 8"/></svg></button><button aria-label="Personalizar"><svg viewBox="0 0 10 10"><path d="M9 10L5 5M2 2l2 3 3-1 1-3"/></svg></button></div>
<div class="command-main">
<div class="history"><p>Comando:</p><p>Comando:</p></div>
<label class="prompt"><span class="prompt-mark"><svg viewBox="0 0 10 8"><path d="M2 2l2 2-2 2M5 6h3"/></svg></span><svg class="prompt-drop" viewBox="0 0 6 4"><path d="M1 3h4L3 1z"/></svg><input type="text" aria-label="Línea de comando"></label>
</div>
</footer>
<script src="scene.js"></script>
</body>
</html>
```

FILE: styles.css
```css
* { box-sizing: border-box; }
body {
  margin: 0;
  height: 100vh;
  display: flex;
  flex-direction: column;
  overflow: hidden;
  background: #666;
  font: 9px/12px "Open Sans", "Noto Sans", sans-serif;
  color: #222;
}
button, select, input { font: inherit; color: inherit; margin: 0; padding: 0; border: 0; background: none; border-radius: 0; }
button { display: flex; align-items: center; justify-content: center; }
svg { display: block; fill: none; stroke: #707070; flex: none; }

/* icon paint */
.w { fill: #fff; }
.g { fill: #bbb; }
.pale { stroke: #aaa; fill: #ddd; }
.faint { stroke: #999; }
.d { stroke: #4c4c4c; }
.k { fill: #4c4c4c; stroke: none; }
.t { stroke: #444; stroke-width: 2; }
.b { stroke: #4189ba; }
.lb { fill: #b5e0fa; }
.bf { fill: #3b6fb5; stroke: none; }
.bar-fill { fill: #666; stroke: none; }
.o { fill: #e9a04a; stroke: #b07a42; }
.yl { fill: #f3e27a; stroke: #8a8350; }
.gr { fill: #7faf86; stroke: #4d7260; }
.r { fill: #b5523f; stroke: #7c4136; }
.rs { stroke: #a9443f; }
.gear { stroke-width: 2; stroke-dasharray: 2 2; }

/* toolbars */
.bars { display: flex; flex-direction: column; gap: 1px; padding-top: 1px; border-top: 1px solid #555; flex: none; }
.bar-row { display: flex; height: 19px; }
.bar { display: flex; align-items: stretch; background: #f3f2f2; border: solid #4c4c4c; border-width: 1px 0; min-width: 0; }
.bar:last-child { border-right-width: 1px; }
.bar-standard { flex: 0 0 491px; }
.bar-styles { flex: 0 0 458px; }
.bar-workspace { flex: 0 0 174px; }
.bar-layers { flex: 0 0 308px; }
.bar-props { flex: 0 0 444px; }
.bar-view { flex: 0 0 359px; }
.bar-visual { flex: 0 0 122px; }
.bar-orbit { flex: 0 0 60px; }
.bar-ucs { flex: 0 0 258px; }
.bar-model { flex: 0 0 408px; }
.grip { flex: 0 0 8px; background: repeating-linear-gradient(90deg, #444 0 2px, #666 2px 4px); border: solid #555; border-width: 0 1px; }
.tool { flex: 1 1 17px; min-width: 0; min-height: 0; }
.tool svg { width: 14px; height: 14px; }
.sep, .hsep { flex: 0 0 1px; margin: 2px; background: #9b9b9b; }
.drop { flex: 0 0 9px; }
.drop::before { content: ""; margin-top: 2px; border: 2px solid transparent; border-top-color: #999; }
.help { width: 11px; height: 13px; border: 1px solid #777; background: #fff; font-weight: 700; color: #333; }
.combo {
  appearance: none;
  flex: 1 1 0;
  min-width: 0;
  padding: 0 14px 1px 6px;
  color: #777;
  background:
    linear-gradient(45deg, transparent 50%, #aaa 50%) right 6px center / 3px 3px no-repeat,
    linear-gradient(135deg, #aaa 50%, transparent 50%) right 3px center / 3px 3px no-repeat,
    #fdfdfd;
}
.bar-styles .tool, .bar-workspace .tool, .bar-layers .tool, .bar-view .tool { flex: 0 0 17px; }
.bar-workspace .sep { margin: 2px 1px; }
.bar-styles .combo { border-left: 1px solid #ccc; }
.bar-view .combo { flex-basis: 60px; }
.field { display: flex; align-items: center; background: #fdfdfd; flex: 1 1 0; min-width: 0; }
.field .combo { align-self: stretch; }
.field-color { flex: 0 0 114px; }
.field-type { flex: 0 0 117px; }
.field-weight { flex: 0 0 95px; }
.field-plot { flex: 1 1 90px; }
.field-plot .combo { padding-left: 10px; }
.mark { width: 14px; height: 14px; }
.field-color .combo { padding-left: 1px; }
.field-layer .combo { padding-left: 4px; }
.layer-marks { width: 60px; height: 14px; margin-left: 3px; }
.line { flex: 0 0 32px; height: 1px; margin-left: 1px; background: #222; }
.field-type .line { flex-basis: 44px; }
.field-weight .line { flex-basis: 28px; margin-left: 3px; }

/* work area */
.work { flex: 1; min-height: 0; display: flex; gap: 4px; padding: 3px 2px 3px 0; border-top: 1px solid #555; }
.side { flex: none; display: flex; flex-direction: column; width: 18px; }
.rail { display: flex; flex-direction: column; background: #f3f2f2; border: solid #484848; border-width: 0 1px 1px 0; }
.side-right .rail { border-width: 0 0 1px 1px; }
.rail-draw { height: 342px; }
.rail-modify { height: 308px; }
.rail-order { height: 113px; }
.grip-top { flex: 0 0 7px; background: repeating-linear-gradient(#444 0 2px, #666 2px 4px); }
.rail .tool { flex: 1 1 0; }
.letter { font: bold 14px/16px "Open Sans", sans-serif; color: #444; }
.window { flex: 1; min-width: 0; display: grid; grid-template: 1fr 15px / 1fr 15px; border: solid #999; border-width: 2px 1px 0 2px; }
.canvas { position: relative; overflow: hidden; background: #21272f; }
.scene { position: absolute; inset: 0; width: 100%; height: 100%; }
.view-label { position: absolute; left: 3px; top: 3px; color: #f0f1f3; }
.fills { stroke: none; }
.dotted { stroke: #2c2c2c; stroke-dasharray: 3 3; }
.dotted-under { stroke: #fff; stroke-opacity: .8; stroke-dasharray: 3 3; stroke-dashoffset: 3; }
.ribs { stroke: #444; stroke-dasharray: 4 3; }
.section { stroke: #8a8782; stroke-opacity: .8; }
.outline { stroke: #f4f5f8; }
.cap { fill: #e7e4da; stroke: #8b8989; }
.grips { fill: #2670c6; stroke: none; }
.gizmo path[fill], .gizmo ellipse { stroke: none; }
.ucs { stroke-width: 3; }
.thin { stroke-width: 1; }
.ring { fill: #424a53; stroke: none; }
.face-top { fill: #b6b8bb; stroke: none; }
.face-left { fill: #a9abae; stroke: none; }
.face-right { fill: #9c9ea1; stroke: none; }
.seams { stroke: #45484d; stroke-dasharray: 5 2; }
.cube-text { font: bold 5px "Liberation Sans", sans-serif; fill: #30343a; stroke: none; }
.pole { font: bold 13px "Liberation Sans", sans-serif; fill: #a9adb2; stroke: none; }
.pole.dim { font-size: 10px; }
.scp { font: 7px "Open Sans", sans-serif; fill: #cfcdd8; stroke: none; }
.menu {
  position: absolute;
  left: 720px;
  top: 379px;
  width: 216px;
  padding: 1px 2px;
  background: linear-gradient(90deg, #f8f3fa, #f9f9fb 30px);
  border: 1px solid #9a9ca0;
  box-shadow: 2px 2px 2px #0008;
}
.menu button { position: relative; width: 100%; height: 17px; justify-content: flex-start; padding-left: 22px; border: 1px solid transparent; border-radius: 2px; white-space: nowrap; }
.menu .hot { background: #f1f4fb; border-color: #d5ddef; }
.menu svg { position: absolute; left: 0; top: -1px; width: 17px; height: 17px; stroke: #27349b; stroke-width: 2; background: #eef2fb; border: 1px solid #d5ddef; }
.menu hr { height: 1px; margin: 2px 0 2px 22px; border: 0; background: #dcdce2; }
.pointer { position: absolute; left: 780px; top: 420px; width: 12px; height: 16px; stroke: #444; fill: #fff; }
.vscroll { display: flex; flex-direction: column; align-items: center; background: #f5f4fb; }
.vscroll button { height: 12px; }
.vscroll svg, .hscroll svg { width: 7px; height: 7px; fill: #444; stroke: none; }
.thumb { width: 11px; height: 12px; border: 1px solid #999; border-radius: 1px; background: linear-gradient(90deg, #fff, #ccc); }
.vscroll .thumb { margin-top: auto; }
.sheet-row { grid-column: 1 / -1; display: flex; background: #fff; border-top: 1px solid #bbb; }
.sheets { display: flex; flex: none; padding-bottom: 2px; }
.step { width: 11px; border-right: 1px solid #ccc; }
.step svg { width: 8px; height: 8px; fill: #666; stroke: none; }
.sheet { position: relative; padding: 0 6px; font-size: 8px; }
.sheet::after { content: ""; position: absolute; right: -1px; top: 0; bottom: 0; width: 1px; background: #555; transform: rotate(25deg); }
.active { background: #21272f; color: #dcdfe2; clip-path: polygon(0 0, 100% 0, calc(100% - 5px) 100%, 5px 100%); padding: 0 9px 0 11px; }
.hscroll { margin-left: auto; width: 425px; padding: 0 13px 0 0; display: flex; align-items: center; justify-content: space-between; background: #f3f5fc; }
.hscroll button { width: 15px; height: 12px; }
.hscroll .thumb { margin-left: 229px; margin-right: auto; background: linear-gradient(#fff, #ccc); }

/* command line */
.command { flex: 0 0 35px; display: flex; overflow: hidden; background: #fff; }
.command-side { flex: 0 0 18px; display: flex; flex-direction: column; align-items: center; gap: 4px; padding-top: 3px; background: #5c5c5c; }
.dots { flex: none; width: 14px; height: 4px; background: repeating-linear-gradient(90deg, #888 0 2px, #5c5c5c 2px 3px); }
.command-side svg { width: 10px; height: 10px; stroke: #f2f2f2; stroke-width: 2; }
.command-main { flex: 1; display: flex; flex-direction: column; }
.history { padding: 1px 1px 2px; background: #c8c6c6; border-bottom: 1px solid #777; font: 9px/11px "DejaVu Sans Mono", monospace; }
.history p { margin: 0; }
.prompt { display: flex; align-items: center; gap: 4px; padding: 3px 4px 0; }
.prompt-mark { background: #ddd; border: 1px solid #bbb; }
.prompt-mark svg { width: 10px; height: 8px; }
.prompt-drop { width: 6px; height: 4px; fill: #666; stroke: none; }
.prompt input { flex: 1; height: 12px; outline: 0; }
```

FILE: scene.js
```js
// Lofted surface: four section curves, joined by evenly spaced isolines.
const sections = [
  [[514,182],[514,187],[516,191],[520,196],[530,199],[542,200],[555,199],[563,197],[570,194],[578,189],[583,182],[582,176]],
  [[466,236],[462,246],[464,254],[469,261],[480,270],[497,276],[535,278],[553,277],[575,272],[602,262],[640,244],[650,225]],
  [[388,306],[373,322],[375,332],[398,349],[445,358],[500,362],[551,369],[580,367],[625,351],[700,317],[741,291],[732,268]],
  [[320,347],[296,366],[300,387],[335,419],[395,443],[500,451],[550,465],[590,463],[651,442],[765,395],[834,352],[824,320]]
];
const steps = [11, 13, 13];

function smooth(points) {
  let d = `M${points[0].join(" ")}`;
  for (let i = 0; i < points.length - 1; i++) {
    const a = points[Math.max(i - 1, 0)], b = points[i], c = points[i + 1];
    const e = points[Math.min(i + 2, points.length - 1)];
    const p = [0, 1].map(k => b[k] + (c[k] - a[k]) / 6);
    const q = [0, 1].map(k => c[k] - (e[k] - b[k]) / 6);
    d += `C${[...p, ...q, ...c].map(n => n.toFixed(1)).join(" ")}`;
  }
  return d;
}

let d = "";
steps.forEach((count, s) => {
  for (let n = 1; n < count; n++) {
    const t = n / count;
    d += smooth(sections[s].map((p, i) => p.map((v, k) => v + (sections[s + 1][i][k] - v) * t)));
  }
});
document.getElementById("mesh").innerHTML =
  `<path class="dotted-under" d="${d}"/><path class="dotted" d="${d}"/>`;

const grips = [[568,168],[517,182],[522,198],[555,199],[580,188],[466,236],[469,261],[497,276],[602,262],[650,234],
  [729,266],[741,291],[700,317],[625,351],[551,369],[500,363],[398,349],[373,329],[295,373],[314,401],[357,430],
  [443,449],[500,451],[550,465],[651,442],[719,414],[828,363],[835,338]];
document.getElementById("grips").innerHTML =
  grips.map(([x, y]) => `<path d="M${x - 5} ${y}l4-3h2l4 3-4 3h-2z"/>`).join("");
```
